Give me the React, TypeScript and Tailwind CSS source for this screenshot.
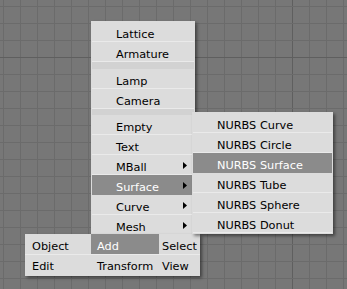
import React from "react";

const Arrow = () => (
  <svg width="4" height="7" viewBox="0 0 4 7" className="mt-[7px] shrink-0">
    <path d="M0 0L4 3.5L0 7Z" fill="#000" />
  </svg>
);

type Item = { label: string; sub?: boolean; active?: boolean } | "sep7" | "sep6";

const mainItems: Item[] = [
  { label: "Lattice" },
  { label: "Armature" },
  "sep7",
  { label: "Lamp" },
  { label: "Camera" },
  "sep6",
  { label: "Empty" },
  { label: "Text" },
  { label: "MBall", sub: true },
  { label: "Surface", sub: true, active: true },
  { label: "Curve", sub: true },
  { label: "Mesh", sub: true },
];

const subItems = [
  "NURBS Curve",
  "NURBS Circle",
  "NURBS Surface",
  "NURBS Tube",
  "NURBS Sphere",
  "NURBS Donut",
];

function Grid() {
  const xs: number[] = [];
  for (let x = 3; x < 347; x += 17) xs.push(x);
  const ys: number[] = [];
  for (let y = 6; y < 289; y += 17) ys.push(y);
  return (
    <svg width="347" height="289" className="absolute left-0 top-0">
      <rect width="347" height="289" fill="#777777" />
      {xs.map((x) => (
        <rect key={"x" + x} x={x} y={0} width={1} height={289} fill={x === 292 ? "#5f5f5f" : "#6b6b6b"} />
      ))}
      {ys.map((y) => (
        <rect key={"y" + y} x={0} y={y} width={347} height={1} fill={y === 57 ? "#5f5f5f" : "#6b6b6b"} />
      ))}
    </svg>
  );
}

export default function App() {
  return (
    <div className="relative w-[347px] h-[289px] overflow-hidden bg-[#777777] font-['DejaVu_Sans','Liberation_Sans',sans-serif] text-[11.3px] text-black">
      <Grid />

      {/* Main Add menu */}
      <div className="absolute left-[91px] top-[21px] w-[104px] p-[1px] bg-[#dcdcdc] shadow-[2px_2px_3px_rgba(0,0,0,0.45)]">
        {mainItems.map((it, i) => {
          if (it === "sep7") return <div key={i} className="h-[7px] bg-[#d2d2d2]" />;
          if (it === "sep6") return <div key={i} className="h-[6px] bg-[#d2d2d2]" />;
          return (
            <div
              key={i}
              className={
                "flex h-[20px] box-border border-b pl-[24px] pr-[7px] " +
                (it.active ? "bg-[#8b8b8b] text-white border-[#8b8b8b]" : "border-[#eaeaea]")
              }
            >
              <span className="flex-1 pt-[6px] leading-[13px] whitespace-nowrap">{it.label}</span>
              {it.sub && <Arrow />}
            </div>
          );
        })}
      </div>

      {/* Bottom toolbox bar */}
      <div className="absolute left-[25px] top-[234px] w-[175px] h-[42px] bg-[#dcdcdc] shadow-[2px_2px_3px_rgba(0,0,0,0.45)]">
        <div className="grid grid-cols-[66px_68px_41px] h-[20px]">
          <div className="pl-[7px] pt-[6px] leading-[13px]">Object</div>
          <div className="pl-[6px] pt-[6px] leading-[13px] bg-[#8b8b8b] text-white">Add</div>
          <div className="pl-[3px] pt-[6px] leading-[13px]">Select</div>
        </div>
        <div className="h-[1px] bg-[#eaeaea]" />
        <div className="grid grid-cols-[66px_68px_41px] h-[21px]">
          <div className="pl-[7px] pt-[5px] leading-[13px]">Edit</div>
          <div className="pl-[6px] pt-[5px] leading-[13px]">Transform</div>
          <div className="pl-[3px] pt-[5px] leading-[13px]">View</div>
        </div>
      </div>

      {/* Surface submenu */}
      <div className="absolute left-[192px] top-[112px] w-[141px] p-[1px] bg-[#dcdcdc] shadow-[2px_2px_3px_rgba(0,0,0,0.45)]">
        {subItems.map((s) => (
          <div
            key={s}
            className={
              "h-[20px] box-border border-b pl-[24px] " +
              (s === "NURBS Surface" ? "bg-[#8b8b8b] text-white border-[#8b8b8b]" : "border-[#eaeaea]")
            }
          >
            <span className="block pt-[6px] leading-[13px] whitespace-nowrap">{s}</span>
          </div>
        ))}
      </div>
    </div>
  );
}
